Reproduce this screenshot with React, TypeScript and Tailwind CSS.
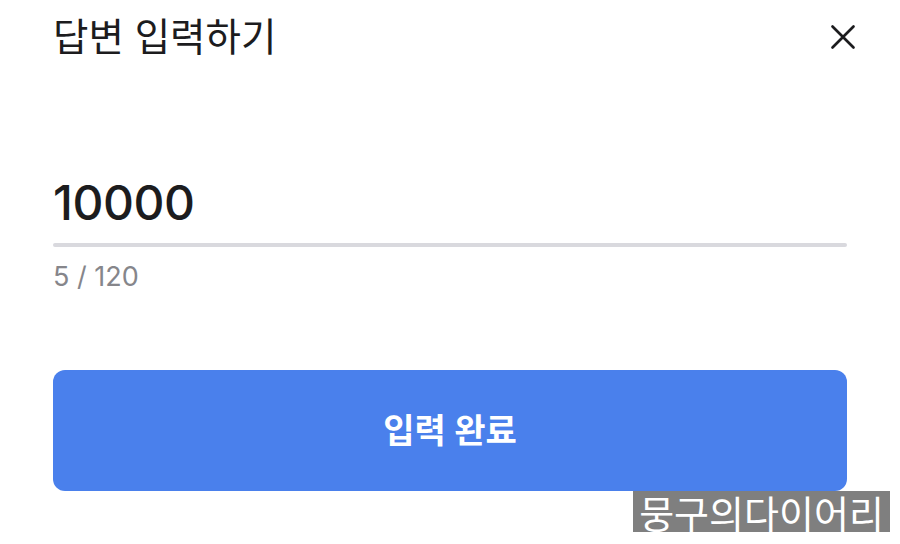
import React from 'react';

const App: React.FC = () => {
    return (
        <div
            className="relative w-[900px] h-[544px] bg-white overflow-hidden"
            style={{ fontFamily: 'Inter, "Noto Sans CJK KR", sans-serif' }}
        >
            <div className="px-[53px] pt-[12px]">
                <div className="flex items-center justify-between h-[52px]">
                    <h1 className="text-[38.5px] font-normal text-[#1c1c1e]">답변 입력하기</h1>
                    <svg width="28" height="28" viewBox="0 0 24 24" className="mr-[-10px] mt-[-2px]" fill="none" stroke="#1c1c1e" strokeWidth="2.3" strokeLinecap="round">
                        <path d="M3 3L21 21M21 3L3 21" />
                    </svg>
                </div>

                <div className="mt-[111px]">
                    <div className="text-[48px] leading-[56px] font-medium text-[#1c1c1e] tracking-[-0.5px]">10000</div>
                    <div className="mt-[12px] h-[4px] w-full rounded-full bg-[#d9d9de]" />
                    <div className="mt-[14px] text-[27px] leading-[32px] text-[#86868b]">5 / 120</div>
                </div>

                <button className="mt-[77px] w-full h-[121px] rounded-[12px] bg-[#4a80ec] text-white text-[34px] font-semibold flex items-center justify-center">
                    입력 완료
                </button>
            </div>

            <div className="absolute left-[633px] top-[491px] w-[257px] h-[41px] bg-[#7f7f7f] flex items-center justify-center">
                <span className="text-[38px] leading-none text-white" style={{ fontFamily: '"Noto Sans CJK KR", sans-serif' }}>뭉구의다이어리</span>
            </div>
        </div>
    );
};

export default App;
